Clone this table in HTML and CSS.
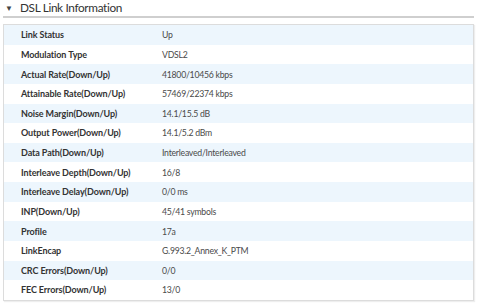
FILE: index.html
```html
<!DOCTYPE html>
<html>
<head>
<meta charset="utf-8">
<link rel="stylesheet" href="styles.css">
</head>
<body>
<div class="page">
  <div class="title"><span class="caret">&#9660;</span><span class="title-text">DSL Link Information</span></div>
  <div class="rule"></div>
  <div class="panel">
    <div class="row"><span class="label">Link Status</span><span class="value">Up</span></div>
    <div class="row"><span class="label">Modulation Type</span><span class="value">VDSL2</span></div>
    <div class="row"><span class="label">Actual Rate(Down/Up)</span><span class="value">41800/10456 kbps</span></div>
    <div class="row"><span class="label">Attainable Rate(Down/Up)</span><span class="value">57469/22374 kbps</span></div>
    <div class="row"><span class="label">Noise Margin(Down/Up)</span><span class="value">14.1/15.5 dB</span></div>
    <div class="row"><span class="label">Output Power(Down/Up)</span><span class="value">14.1/5.2 dBm</span></div>
    <div class="row"><span class="label">Data Path(Down/Up)</span><span class="value">Interleaved/Interleaved</span></div>
    <div class="row"><span class="label">Interleave Depth(Down/Up)</span><span class="value">16/8</span></div>
    <div class="row"><span class="label">Interleave Delay(Down/Up)</span><span class="value">0/0 ms</span></div>
    <div class="row"><span class="label">INP(Down/Up)</span><span class="value">45/41 symbols</span></div>
    <div class="row"><span class="label">Profile</span><span class="value">17a</span></div>
    <div class="row"><span class="label">LinkEncap</span><span class="value">G.993.2_Annex_K_PTM</span></div>
    <div class="row"><span class="label">CRC Errors(Down/Up)</span><span class="value">0/0</span></div>
    <div class="row"><span class="label">FEC Errors(Down/Up)</span><span class="value">13/0</span></div>
  </div>
</div>
</body>
</html>
```
FILE: styles.css
```css
html, body {
  margin: 0;
  padding: 0;
  background: #ffffff;
}
.page {
  width: 480px;
  height: 305px;
  overflow: hidden;
  font-family: "Lato", "Open Sans", sans-serif;
}
.title {
  display: flex;
  align-items: center;
  height: 16px;
  padding-left: 5px;
  color: #333333;
}
.caret {
  font-size: 8px;
  width: 15px;
  color: #444444;
}
.title-text {
  font-size: 11.8px;
  letter-spacing: -0.35px;
  line-height: 16px;
}
.rule {
  margin: 0 6px 0 3px;
  border-bottom: 2px solid #cfcfcf;
}
.panel {
  margin: 6px 6px 0 3px;
  border: 1px solid #dcdcdc;
  box-shadow: 1px 1px 1px #eeeeee;
}
.row {
  display: flex;
  align-items: center;
  height: 19.64px;
  padding-left: 17px;
}
.row:nth-child(odd) {
  background: #edf6fd;
}
.label {
  width: 141px;
  font-size: 9px;
  letter-spacing: -0.1px;
  font-weight: 700;
  color: #333333;
}
.value {
  font-size: 8.7px;
  letter-spacing: -0.25px;
  color: #4a4a4a;
}
```
